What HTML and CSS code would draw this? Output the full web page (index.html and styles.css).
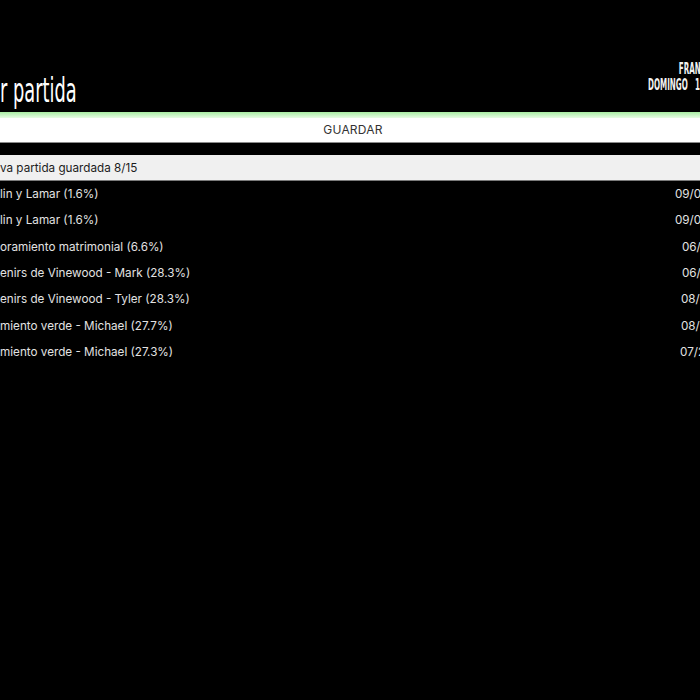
FILE: index.html
```html
<!DOCTYPE html>
<html lang="es">
<head>
<meta charset="utf-8">
<title>Guardar partida</title>
<link rel="stylesheet" href="styles.css">
</head>
<body>
<div class="screen">
  <header class="header">
    <h1 class="title">r partida</h1>
    <div class="player">
      <div class="player-line name">FRANKLIN</div>
      <div class="player-line">DOMINGO 14:22</div>
    </div>
  </header>
  <div class="accent"></div>
  <div class="tab">GUARDAR</div>
  <ul class="list">
    <li class="row selected"><span class="label">va partida guardada 8/15</span></li>
    <li class="row"><span class="label">lin y Lamar (1.6%)</span><span class="date">09/07/2015 20:14</span></li>
    <li class="row"><span class="label">lin y Lamar (1.6%)</span><span class="date">09/07/2015 19:52</span></li>
    <li class="row"><span class="label">oramiento matrimonial (6.6%)</span><span class="date shift">06/08/2015 22:10</span></li>
    <li class="row"><span class="label">enirs de Vinewood - Mark (28.3%)</span><span class="date shift">06/08/2015 21:47</span></li>
    <li class="row"><span class="label">enirs de Vinewood - Tyler (28.3%)</span><span class="date shift-s">08/08/2015 18:30</span></li>
    <li class="row"><span class="label">miento verde - Michael (27.7%)</span><span class="date shift-s">08/08/2015 17:05</span></li>
    <li class="row"><span class="label">miento verde - Michael (27.3%)</span><span class="date shift-xs">07/28/2015 23:41</span></li>
  </ul>
</div>
</body>
</html>
```
FILE: styles.css
```css
html, body {
  margin: 0;
  padding: 0;
  width: 700px;
  height: 700px;
  overflow: hidden;
  background: #000;
}

.screen {
  width: 700px;
  font-family: Inter, "Liberation Sans", sans-serif;
}

.header {
  height: 112px;
  display: flex;
  justify-content: space-between;
  align-items: flex-end;
}

.title {
  margin: 0;
  padding-bottom: 5px;
  font-family: "Liberation Sans Narrow", "DejaVu Sans Condensed", sans-serif;
  font-weight: normal;
  font-size: 33px;
  line-height: 33px;
  color: #fff;
  white-space: nowrap;
  transform: scaleX(0.6);
  transform-origin: left bottom;
}

.player {
  align-self: flex-start;
  margin-top: 61px;
  width: 52px;
  font-family: "Liberation Sans Narrow", "DejaVu Sans Condensed", sans-serif;
  font-weight: bold;
  font-size: 15px;
  line-height: 16px;
  color: #f2f2f2;
  white-space: nowrap;
  word-spacing: 9px;
  transform: scaleX(0.53);
  transform-origin: left top;
}

.player-line.name {
  padding-left: 58px;
}

.accent {
  height: 6px;
  background: linear-gradient(#a8eca2, #e8fce5);
}

.tab {
  height: 24px;
  line-height: 24px;
  background: #fff;
  border-bottom: 1px solid #8a8a8a;
  text-align: center;
  padding-left: 6px;
  font-size: 12px;
  color: #333;
  letter-spacing: 0.2px;
}

.list {
  list-style: none;
  margin: 12px 0 0;
  padding: 0;
}

.row {
  height: 26.3px;
  display: flex;
  align-items: center;
  font-size: 11.7px;
  color: #e2e2e2;
  white-space: nowrap;
}

.row.selected {
  height: 25px;
  background: #f0f0f0;
  border-bottom: 1px solid #7a7a7a;
  color: #1c1c1c;
}

.label {
  flex: 1;
}

.date {
  width: 25px;
  overflow: hidden;
}

.date.shift {
  padding-left: 7px;
  width: 18px;
}

.date.shift-s {
  padding-left: 6px;
  width: 19px;
}

.date.shift-xs {
  padding-left: 5px;
  width: 20px;
}
```
